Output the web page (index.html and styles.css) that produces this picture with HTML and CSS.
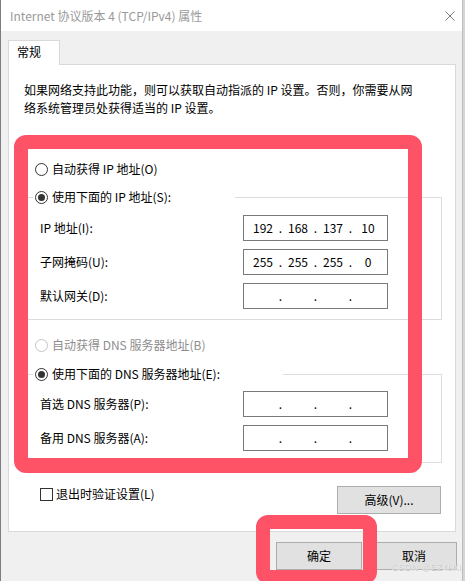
FILE: index.html
```html
<!DOCTYPE html>
<html>
<head>
  <meta charset="utf-8">
  <title>Internet 协议版本 4 (TCP/IPv4) 属性</title>
  <link rel="stylesheet" href="styles.css">
</head>
<body>
  <div class="window">
    <div class="titlebar">
      <span class="title">Internet 协议版本 4 (TCP/IPv4) 属性</span>
      <svg class="close" width="10" height="10" viewBox="0 0 10 10">
        <path d="M0.5 0.5 L9.5 9.5 M9.5 0.5 L0.5 9.5" stroke="#7a7a7a" stroke-width="1" fill="none"/>
      </svg>
    </div>

    <div class="client">
      <div class="tab">常规</div>

      <div class="panel">
        <p class="intro">如果网络支持此功能，则可以获取自动指派的 IP 设置。否则，你需要从网<br>络系统管理员处获得适当的 IP 设置。</p>

        <div class="radio radio-first"><span class="dot"></span>自动获得 IP 地址(O)</div>

        <fieldset class="group group-ip">
          <legend class="caption caption-ip"><span class="radio"><span class="dot checked"></span>使用下面的 IP 地址(S):</span></legend>
          <div class="field">
            <span>IP 地址(I):</span>
            <div class="ip"><span class="oct">192</span><span class="sep">.</span><span class="oct">168</span><span class="sep">.</span><span class="oct">137</span><span class="sep">.</span><span class="oct">10</span></div>
          </div>
          <div class="field">
            <span>子网掩码(U):</span>
            <div class="ip"><span class="oct">255</span><span class="sep">.</span><span class="oct">255</span><span class="sep">.</span><span class="oct">255</span><span class="sep">.</span><span class="oct">0</span></div>
          </div>
          <div class="field">
            <span>默认网关(D):</span>
            <div class="ip"><span class="oct"></span><span class="sep">.</span><span class="oct"></span><span class="sep">.</span><span class="oct"></span><span class="sep">.</span><span class="oct"></span></div>
          </div>
        </fieldset>

        <div class="radio radio-dns disabled"><span class="dot"></span>自动获得 DNS 服务器地址(B)</div>

        <fieldset class="group group-dns">
          <legend class="caption caption-dns"><span class="radio"><span class="dot checked"></span>使用下面的 DNS 服务器地址(E):</span></legend>
          <div class="field">
            <span>首选 DNS 服务器(P):</span>
            <div class="ip"><span class="oct"></span><span class="sep">.</span><span class="oct"></span><span class="sep">.</span><span class="oct"></span><span class="sep">.</span><span class="oct"></span></div>
          </div>
          <div class="field">
            <span>备用 DNS 服务器(A):</span>
            <div class="ip"><span class="oct"></span><span class="sep">.</span><span class="oct"></span><span class="sep">.</span><span class="oct"></span><span class="sep">.</span><span class="oct"></span></div>
          </div>
        </fieldset>

        <div class="panel-foot">
          <div class="check"><span class="box"></span>退出时验证设置(L)</div>
          <button class="btn btn-advanced">高级(V)...</button>
        </div>
      </div>

      <div class="actions">
        <button class="btn">确定</button>
        <button class="btn">取消</button>
      </div>
    </div>

    <!-- annotation frames drawn over the dialog -->
    <div class="mark mark-settings"></div>
    <div class="mark mark-ok"></div>
    <div class="watermark">CSDN @EZ4sKi</div>
  </div>
</body>
</html>
```

FILE: styles.css
```css
* {
  box-sizing: border-box;
}
html, body {
  margin: 0;
}
body {
  background: #d6d6d6;
  font-family: "Noto Sans CJK SC", "Noto Sans", sans-serif;
  font-size: 12px;
  line-height: 18px;
  color: #000;
}
.window {
  position: relative;
  width: 463px;
  height: 581px;
  background: #f0f0f0;
  border-left: 1px solid #7d7d7d;
  border-right: 1px solid #bdbdbd;
  overflow: hidden;
}
.titlebar {
  height: 31px;
  background: #fff;
  display: flex;
  align-items: center;
  justify-content: space-between;
  padding: 0 7px 0 9px;
}
.title {
  color: #9a9a9a;
}
.close {
  display: block;
}
.client {
  padding: 9px 5px 0 7px;
}
.tab {
  position: relative;
  width: 52px;
  height: 25px;
  margin-bottom: -1px;
  padding-left: 8px;
  line-height: 22px;
  background: #fff;
  border: 1px solid #d9d9d9;
  border-bottom: none;
}
.panel {
  width: 448px;
  background: #fff;
  border: 1px solid #d9d9d9;
  padding: 16px 0 17px 0;
}
.intro {
  margin: 0 0 0 15px;
}

/* radio buttons */
.radio {
  display: flex;
  align-items: center;
  gap: 4px;
  height: 18px;
}
.radio-first {
  margin: 43px 0 0 26px;
}
.radio-dns {
  margin: 16px 0 0 26px;
}
.dot {
  width: 13px;
  height: 13px;
  border: 1px solid #333;
  border-radius: 50%;
  display: flex;
  align-items: center;
  justify-content: center;
  background: #fff;
}
.dot.checked::after {
  content: "";
  width: 7px;
  height: 7px;
  border-radius: 50%;
  background: #333;
}
.disabled {
  color: #8d8d8d;
}
.disabled .dot {
  border-color: #c4c4c4;
}

/* group boxes */
.group {
  margin: 10px 13px 0 11px;
  border: 1px solid #dcdcdc;
  padding: 9px 0 10px 0;
  min-width: 0;
}
.group-dns {
  margin-top: 11px;
  padding: 8px 0 11px 0;
}
.caption {
  margin-left: 12px;
  padding: 0 0 0 2px;
  background: #fff;
}
.caption-ip {
  width: 202px;
}
.caption-dns {
  width: 250px;
}
.field {
  display: flex;
  align-items: center;
  justify-content: space-between;
  height: 26px;
  padding: 0 53px 0 19px;
}
.field + .field {
  margin-top: 8px;
}
.ip {
  width: 145px;
  height: 26px;
  border: 1px solid #7a7a7a;
  display: flex;
  align-items: center;
  padding-left: 4px;
}
.oct {
  width: 30px;
  text-align: center;
}
.sep {
  width: 5px;
  text-align: center;
}

/* bottom of panel */
.panel-foot {
  display: flex;
  justify-content: space-between;
  align-items: flex-start;
  margin: 22px 14px 0 31px;
}
.check {
  display: flex;
  align-items: center;
  gap: 3px;
}
.box {
  width: 13px;
  height: 13px;
  border: 1px solid #333;
  background: #fff;
}
.btn {
  width: 86px;
  height: 28px;
  padding: 0;
  font: inherit;
  color: #000;
  background: #e1e1e1;
  border: 1px solid #adadad;
}
.btn-advanced {
  width: 104px;
  margin-top: 1px;
}
.actions {
  display: flex;
  justify-content: flex-end;
  gap: 9px;
  margin-top: 10px;
}

/* red highlight frames */
.mark {
  position: absolute;
  border: 14px solid #fe5267;
  border-radius: 12px;
}
.mark-settings {
  left: 13px;
  top: 135px;
  width: 408px;
  height: 338px;
  border-bottom-width: 15px;
}
.mark-ok {
  left: 255px;
  top: 515px;
  width: 121px;
  height: 69px;
}
.watermark {
  position: absolute;
  left: 391px;
  top: 563px;
  font-family: "Liberation Sans", sans-serif;
  font-size: 9px;
  line-height: 10px;
  letter-spacing: 0.3px;
  color: #c4c4c4;
  text-shadow: 0 0 1px #fff, 0 0 1px #fff;
}
```
